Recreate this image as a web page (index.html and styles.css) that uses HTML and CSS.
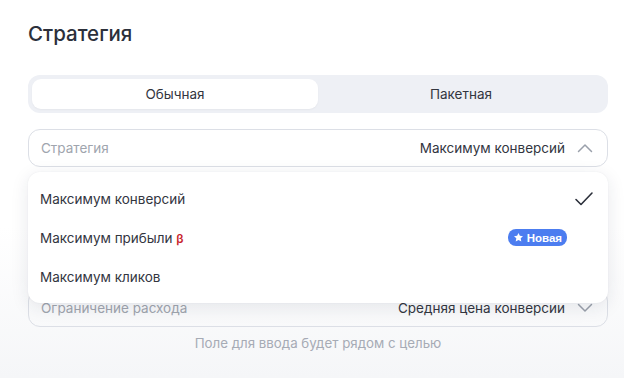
FILE: index.html
```html
<!DOCTYPE html>
<html lang="ru">
<head>
<meta charset="utf-8">
<link rel="stylesheet" href="styles.css">
</head>
<body>
<div class="page">
  <h1 class="title">Стратегия</h1>
  <div class="tabs">
    <div class="tab active">Обычная</div>
    <div class="tab">Пакетная</div>
  </div>
  <div class="field open">
    <span class="label">Стратегия</span>
    <span class="value">Максимум конверсий</span>
    <svg class="chev" width="16" height="10" viewBox="0 0 16 10"><path d="M1.5 8.5 L8 2 L14.5 8.5" fill="none" stroke="#9aa0ab" stroke-width="1.5" stroke-linecap="round" stroke-linejoin="round"/></svg>
  </div>
  <div class="field second">
    <span class="label">Ограничение расхода</span>
    <span class="value">Средняя цена конверсии</span>
    <svg class="chev" width="16" height="10" viewBox="0 0 16 10"><path d="M1.5 1.5 L8 8 L14.5 1.5" fill="none" stroke="#9aa0ab" stroke-width="1.5" stroke-linecap="round" stroke-linejoin="round"/></svg>
  </div>
  <div class="hint">Поле для ввода будет рядом с целью</div>

  <div class="menu">
    <div class="item">
      <span>Максимум конверсий</span>
      <svg class="check" width="20" height="16" viewBox="0 0 20 16"><path d="M2 8.5 L7 13.5 L18 2" fill="none" stroke="#2b2f3a" stroke-width="1.6" stroke-linecap="round" stroke-linejoin="round"/></svg>
    </div>
    <div class="item">
      <span>Максимум прибыли <span class="beta">β</span></span>
      <span class="badge"><svg width="11" height="11" viewBox="0 0 24 24"><path d="M12 2l3 6.3 6.8.9-5 4.7 1.3 6.8L12 17.4l-6.1 3.3 1.3-6.8-5-4.7 6.8-.9z" fill="#fff"/></svg>Новая</span>
    </div>
    <div class="item">
      <span>Максимум кликов</span>
    </div>
  </div>
</div>
</body>
</html>
```

FILE: styles.css
```css
* { box-sizing: border-box; }
html, body { margin: 0; padding: 0; }
body {
  width: 624px;
  height: 378px;
  overflow: hidden;
  font-family: Inter, "Noto Sans", sans-serif;
  color: #33363f;
  background: linear-gradient(180deg, #ffffff 0%, #ffffff 60%, #f5f6f8 100%);
}
.page {
  position: relative;
  padding: 20px 16px 0 28px;
  display: flex;
  flex-direction: column;
}
.title {
  margin: 0;
  font-size: 20.5px;
  font-weight: 550;
  line-height: 28px;
  color: #2c303b;
}
.tabs {
  margin-top: 27px;
  display: flex;
  background: #eef0f5;
  border-radius: 12px;
  padding: 4px;
  height: 38px;
}
.tab {
  flex: 1;
  display: flex;
  align-items: center;
  justify-content: center;
  font-size: 13.5px;
  color: #33363f;
  border-radius: 9px;
}
.tab.active {
  background: #fff;
  box-shadow: 0 1px 2px rgba(0,0,0,0.04);
}
.field {
  height: 38px;
  border: 1px solid #dcdfe6;
  border-radius: 12px;
  display: flex;
  align-items: center;
  padding: 0 14px 0 12px;
  font-size: 13.5px;
  background: #fff;
}
.field.open { margin-top: 16px; }
.field.second { margin-top: 122px; background: transparent; }
.label { color: #a0a5ae; flex: 1; }
.value { color: #33363f; }
.chev { margin-left: 12px; }
.hint {
  margin-top: 8px;
  text-align: center;
  font-size: 13.3px;
  color: #a6abb5;
  line-height: 16px;
}
.menu {
  position: absolute;
  left: 28px;
  top: 172px;
  width: 580px;
  height: 131px;
  background: #fff;
  border-radius: 12px;
  box-shadow: 0 4px 18px rgba(30,40,70,0.10), 0 0 2px rgba(30,40,70,0.06);
  padding: 7px 0;
  display: flex;
  flex-direction: column;
}
.item {
  height: 39px;
  display: flex;
  align-items: center;
  justify-content: space-between;
  padding: 0 14px 0 12px;
  font-size: 13.5px;
  color: #33363f;
}
.beta { color: #c81e2c; font-size: 12px; font-weight: 600; }
.badge {
  display: inline-flex;
  align-items: center;
  gap: 3px;
  background: #4c7df0;
  color: #fff;
  font-size: 11.5px;
  font-weight: 700;
  border-radius: 8px;
  height: 17px;
  padding: 0 5px 0 5px;
  margin-right: 27px;
  font-family: "Liberation Sans", Arial, sans-serif;
}
```
